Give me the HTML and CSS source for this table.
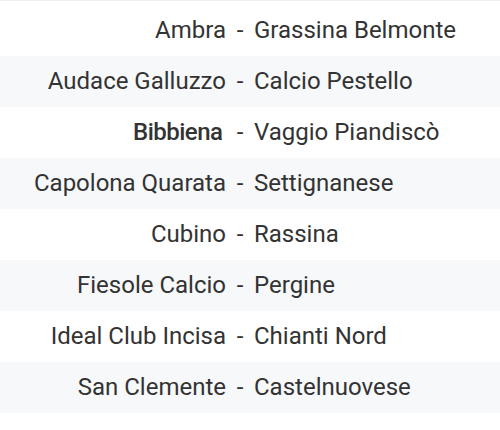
FILE: index.html
```html
<!DOCTYPE html>
<html lang="it">
<head>
<meta charset="utf-8">
<link rel="stylesheet" href="styles.css">
</head>
<body>
<div class="top-line"></div>
<div class="matches">
  <div class="row"><span class="home">Ambra</span><span class="sep">-</span><span class="away">Grassina Belmonte</span></div>
  <div class="row alt"><span class="home">Audace Galluzzo</span><span class="sep">-</span><span class="away">Calcio Pestello</span></div>
  <div class="row"><span class="home bold">Bibbiena</span><span class="sep">-</span><span class="away">Vaggio Piandiscò</span></div>
  <div class="row alt"><span class="home">Capolona Quarata</span><span class="sep">-</span><span class="away">Settignanese</span></div>
  <div class="row"><span class="home">Cubino</span><span class="sep">-</span><span class="away">Rassina</span></div>
  <div class="row alt"><span class="home">Fiesole Calcio</span><span class="sep">-</span><span class="away">Pergine</span></div>
  <div class="row"><span class="home">Ideal Club Incisa</span><span class="sep">-</span><span class="away">Chianti Nord</span></div>
  <div class="row alt"><span class="home">San Clemente</span><span class="sep">-</span><span class="away">Castelnuovese</span></div>
</div>
</body>
</html>
```
FILE: styles.css
```css
html, body {
  margin: 0;
  padding: 0;
  background: #ffffff;
}
body {
  font-family: Roboto, "Liberation Sans", sans-serif;
  color: #333333;
  width: 500px;
  height: 430px;
}
.top-line {
  height: 1px;
  background: #eef0f2;
}
.matches {
  padding-top: 3.5px;
}
.row {
  display: grid;
  grid-template-columns: 226px 28px 1fr;
  align-items: center;
  height: 51px;
  font-size: 24px;
}
.row.alt {
  background: #f7f8fa;
}
.home {
  text-align: right;
}
.sep {
  text-align: center;
}
.away {
  text-align: left;
}
.bold {
  font-weight: 500;
  letter-spacing: -0.5px;
  padding-right: 3.5px;
}
```
